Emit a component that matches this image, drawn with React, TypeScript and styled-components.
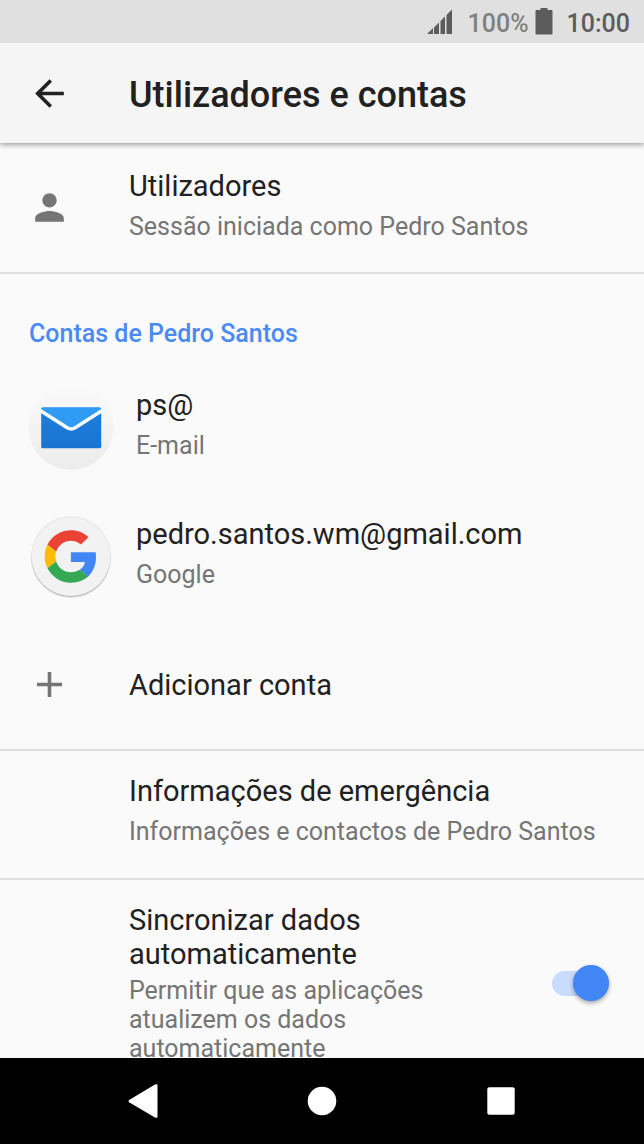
import React from "react";
import styled, { createGlobalStyle } from "styled-components";

const GlobalStyle = createGlobalStyle`
  * { box-sizing: border-box; }
  body { margin: 0; background: #fafafa; }
  button { border: 0; margin: 0; padding: 0; background: none; font: inherit; color: inherit; text-align: left; cursor: pointer; }
`;

const Screen = styled.div`
  display: flex;
  flex-direction: column;
  height: 100vh;
  font-family: Roboto, "Liberation Sans", sans-serif;
  color: #212121;
  background: #fafafa;
`;

const StatusBar = styled.div`
  display: flex;
  flex: none;
  align-items: center;
  justify-content: flex-end;
  height: 43px;
  padding: 3px 14px 0 0;
  background: #e0e0e0;
  font-size: 25px;
  line-height: 29px;
  font-weight: 500;
  color: #5c5c5c;
  z-index: 2;
`;

const Battery = styled.span`
  margin-left: 15px;
  color: #808080;
`;

const BatteryIcon = styled.svg`
  width: 18px;
  height: 28px;
  margin: 0 14px 4px 6px;
`;

const SignalIcon = styled.svg`
  width: 26px;
  height: 26px;
  margin-bottom: 2px;
`;

const AppBar = styled.header`
  display: flex;
  flex: none;
  align-items: center;
  gap: 58px;
  height: 100px;
  padding: 0 28px;
  background: #f5f5f5;
  box-shadow: 0 2px 5px rgba(0, 0, 0, 0.36);
  z-index: 1;
`;

const IconButton = styled.button`
  display: flex;
`;

const Title = styled.h1`
  margin: 0;
  padding-top: 4px;
  font-size: 36px;
  line-height: 42px;
  font-weight: 500;
`;

const Icon = styled.svg<{ $color?: string }>`
  flex: none;
  width: 43px;
  height: 43px;
  fill: ${(p) => p.$color ?? "#757575"};
`;

const AvatarIcon = styled.svg`
  flex: none;
  width: 86px;
  height: 86px;
`;

const List = styled.main`
  flex: 1;
  min-height: 0;
  overflow-y: auto;
  scrollbar-width: none;
`;

const Group = styled.section`
  & + & {
    border-top: 2px solid #dedede;
  }
`;

const GroupTitle = styled.h2`
  margin: 0;
  padding: 45px 29px 14px;
  font-size: 25px;
  line-height: 29px;
  font-weight: 500;
  color: #4a8af4;
`;

const Row = styled.button<{ $gap?: number }>`
  display: flex;
  align-items: center;
  gap: ${(p) => p.$gap ?? 58}px;
  width: 100%;
  min-height: 129px;
  padding: 0 28px;
`;

const Texts = styled.span`
  display: flex;
  flex: 1;
  flex-direction: column;
  gap: 9px;
  padding-bottom: 6px;
`;

const TightTexts = styled(Texts)`
  gap: 5px;
  padding-bottom: 0;
`;

const Primary = styled.span`
  font-size: 29px;
  line-height: 34px;
`;

const Secondary = styled.span`
  font-size: 25px;
  line-height: 29px;
  color: #757575;
`;

const IndentedRow = styled(Row)`
  min-height: 127px;
  padding: 0 28px 4px 129px;
`;

const SwitchRow = styled.label`
  display: flex;
  align-items: center;
  gap: 57px;
  padding: 23px 35px 22px 129px;
  cursor: pointer;
`;

const Switch = styled.input`
  appearance: none;
  flex: none;
  display: flex;
  align-items: center;
  justify-content: flex-end;
  width: 57px;
  height: 25px;
  margin: 0;
  border-radius: 13px;
  background: #d0d0d0;
  cursor: pointer;

  &::before {
    content: "";
    flex: none;
    width: 36px;
    height: 36px;
    border-radius: 50%;
    background: #fff;
    box-shadow: 0 2px 4px rgba(0, 0, 0, 0.35);
  }

  &:not(:checked) {
    justify-content: flex-start;
  }

  &:checked {
    background: #c9dcfc;
  }

  &:checked::before {
    background: #4285f4;
  }
`;

const NavBar = styled.nav`
  display: flex;
  flex: none;
  align-items: center;
  justify-content: center;
  gap: 93px;
  height: 86px;
  background: #000;
`;

const NavButton = styled.button`
  display: flex;
  justify-content: center;
  width: 86px;
`;

const NavIcon = styled.svg`
  width: 36px;
  height: 36px;
  fill: #fff;
`;

function EmailIcon() {
  return (
    <AvatarIcon viewBox="-0.5 0 86 86" aria-hidden="true">
      <defs>
        <linearGradient id="mailDisc" x1="0" y1="0" x2="0" y2="1">
          <stop offset="0" stopColor="#fafafa" />
          <stop offset="1" stopColor="#ececec" />
        </linearGradient>
        <linearGradient id="mailBody" x1="0" y1="0" x2="0" y2="1">
          <stop offset="0" stopColor="#1e7fdc" />
          <stop offset="1" stopColor="#1b73d0" />
        </linearGradient>
      </defs>
      <circle cx="42.500" cy="43.500" r="42.500" fill="url(#mailDisc)" />
      <rect x="12.700" y="23.500" width="60" height="40.800" rx="1.500" fill="url(#mailBody)" />
      <path d="M12.700 25q0-1.500 1.500-1.500h57q1.500 0 1.500 1.500v2L46 44q-3.500 2-7 0L12.700 27z" fill="#2f9bf4" />
      <path d="M11.700 26.600L38.700 43.800q4 2.400 8 0L73.700 26.600" fill="none" stroke="#f4faff" strokeWidth="3.600" />
    </AvatarIcon>
  );
}

function GoogleIcon() {
  return (
    <AvatarIcon viewBox="-0.5 0 86 86" aria-hidden="true">
      <circle cx="42.500" cy="45" r="40" fill="#000" opacity=".1" />
      <circle cx="42.500" cy="44.200" r="39.800" fill="#000" opacity=".15" />
      <circle cx="42.500" cy="43" r="39.800" fill="#e6e6e6" />
      <circle cx="42.500" cy="43.500" r="39.200" fill="#f2f2f2" />
      <g transform="translate(16.200 17.300) scale(1.092)">
        <path fill="#EA4335" d="M24 9.500c3.540 0 6.710 1.220 9.210 3.600l6.850-6.850C35.900 2.380 30.470 0 24 0 14.620 0 6.510 5.380 2.560 13.220l7.980 6.190C12.430 13.720 17.740 9.500 24 9.500z" />
        <path fill="#4285F4" d="M46.980 24.550c0-1.570-.15-3.090-.38-4.550H24v9.020h12.940c-.58 2.960-2.260 5.480-4.780 7.180l7.730 6c4.510-4.180 7.090-10.360 7.090-17.650z" />
        <path fill="#FBBC05" d="M10.530 28.590c-.48-1.450-.76-2.990-.76-4.590s.27-3.140.76-4.590l-7.980-6.190C.92 16.460 0 20.120 0 24c0 3.880.92 7.540 2.560 10.780l7.970-6.190z" />
        <path fill="#34A853" d="M24 48c6.480 0 11.930-2.130 15.890-5.810l-7.730-6c-2.150 1.450-4.920 2.300-8.160 2.300-6.260 0-11.570-4.220-13.470-9.910l-7.980 6.190C6.510 42.620 14.620 48 24 48z" />
      </g>
    </AvatarIcon>
  );
}

export default function App() {
  return (
    <Screen>
      <GlobalStyle />
      <StatusBar>
        <SignalIcon viewBox="0 0 26 26" aria-hidden="true">
          <path d="M0 25L6 19v6zM7 25V18.500L12 13.500V25zM13.500 25V12L18 7.500V25zM19.500 25V6L25 .5V25z" fill="#5c5c5c" />
        </SignalIcon>
        <Battery>100%</Battery>
        <BatteryIcon viewBox="0 0 18 28" aria-hidden="true">
          <path d="M5.500 3V1h7v2h4q1 0 1 1v22.500q0 1-1 1h-15q-1 0-1-1V4q0-1 1-1z" fill="#5c5c5c" />
        </BatteryIcon>
        <time>10:00</time>
      </StatusBar>

      <AppBar>
        <IconButton type="button" aria-label="Voltar">
          <Icon viewBox="0 0 24 24" $color="#212121" aria-hidden="true">
            <path d="M20 11H7.830l5.590-5.590L12 4l-8 8 8 8 1.410-1.410L7.830 13H20z" />
          </Icon>
        </IconButton>
        <Title>Utilizadores e contas</Title>
      </AppBar>

      <List>
        <Group>
          <Row type="button">
            <Icon viewBox="0 0 24 24" aria-hidden="true">
              <path d="M12 12c2.210 0 4-1.790 4-4s-1.790-4-4-4-4 1.790-4 4 1.790 4 4 4zm0 2c-2.670 0-8 1.340-8 4v2h16v-2c0-2.660-5.330-4-8-4z" />
            </Icon>
            <Texts>
              <Primary>Utilizadores</Primary>
              <Secondary>Sessão iniciada como Pedro Santos</Secondary>
            </Texts>
          </Row>
        </Group>

        <Group>
          <GroupTitle>Contas de Pedro Santos</GroupTitle>
          <Row type="button" $gap={22}>
            <EmailIcon />
            <Texts>
              <Primary>ps@</Primary>
              <Secondary>E-mail</Secondary>
            </Texts>
          </Row>
          <Row type="button" $gap={22}>
            <GoogleIcon />
            <Texts>
              <Primary>pedro.santos.wm@gmail.com</Primary>
              <Secondary>Google</Secondary>
            </Texts>
          </Row>
          <Row type="button">
            <Icon viewBox="0 0 24 24" aria-hidden="true">
              <path d="M19 13h-6v6h-2v-6H5v-2h6V5h2v6h6z" />
            </Icon>
            <Primary>Adicionar conta</Primary>
          </Row>
        </Group>

        <Group>
          <IndentedRow type="button">
            <Texts>
              <Primary>Informações de emergência</Primary>
              <Secondary>Informações e contactos de Pedro Santos</Secondary>
            </Texts>
          </IndentedRow>
        </Group>

        <Group>
          <SwitchRow>
            <TightTexts>
              <Primary>Sincronizar dados automaticamente</Primary>
              <Secondary>Permitir que as aplicações atualizem os dados automaticamente</Secondary>
            </TightTexts>
            <Switch type="checkbox" role="switch" defaultChecked />
          </SwitchRow>
        </Group>
      </List>

      <NavBar>
        <NavButton type="button" aria-label="Retroceder">
          <NavIcon viewBox="0 0 36 36" aria-hidden="true">
            <path d="M4.500 16.700L30 1.500q2.500-1 2.500 1v31q0 2-2.500 1L4.500 19.500q-2-1.400 0-2.800z" />
          </NavIcon>
        </NavButton>
        <NavButton type="button" aria-label="Início">
          <NavIcon viewBox="0 0 36 36" aria-hidden="true">
            <circle cx="18" cy="18" r="14.300" />
          </NavIcon>
        </NavButton>
        <NavButton type="button" aria-label="Recentes">
          <NavIcon viewBox="0 0 36 36" aria-hidden="true">
            <rect x="4.300" y="4.300" width="27.400" height="27.400" rx="2" />
          </NavIcon>
        </NavButton>
      </NavBar>
    </Screen>
  );
}
